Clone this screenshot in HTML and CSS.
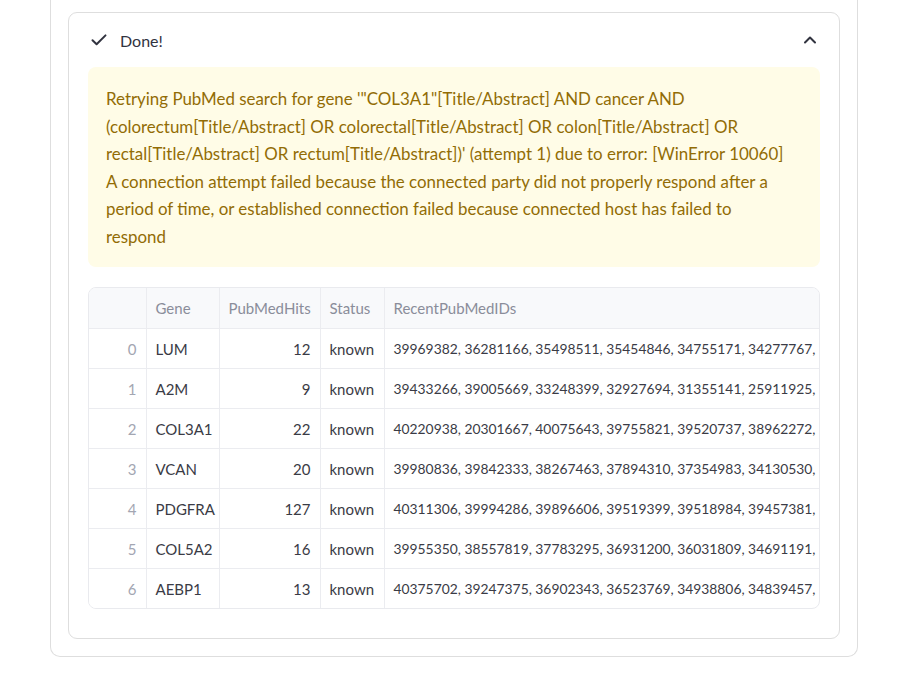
FILE: index.html
```html
<!DOCTYPE html>
<html>
<head>
<meta charset="utf-8">
<link rel="stylesheet" href="styles.css">
</head>
<body>
<div class="outer">
  <div class="expander">
    <div class="exp-head">
      <svg class="check" width="16" height="16" viewBox="0 0 16 16"><path d="M1.5 8.2 L5.6 12.2 L14.5 3.4" fill="none" stroke="#31333f" stroke-width="2" stroke-linecap="round" stroke-linejoin="round"/></svg>
      <span class="exp-title">Done!</span>
      <svg class="chev" width="14" height="14" viewBox="0 0 14 14"><path d="M2 9.5 L7 4.5 L12 9.5" fill="none" stroke="#31333f" stroke-width="2" stroke-linecap="round" stroke-linejoin="round"/></svg>
    </div>
    <div class="exp-body">
      <div class="alert">Retrying PubMed search for gene '"COL3A1"[Title/Abstract] AND cancer AND (colorectum[Title/Abstract] OR colorectal[Title/Abstract] OR colon[Title/Abstract] OR rectal[Title/Abstract] OR rectum[Title/Abstract])' (attempt 1) due to error: [WinError 10060] A connection attempt failed because the connected party did not properly respond after a period of time, or established connection failed because connected host has failed to respond</div>
      <div class="table-wrap">
        <table class="df">
          <thead>
            <tr><th class="idx"></th><th class="c-gene">Gene</th><th class="c-hits">PubMedHits</th><th class="c-status">Status</th><th class="c-ids">RecentPubMedIDs</th></tr>
          </thead>
          <tbody>
            <tr><td class="idx">0</td><td>LUM</td><td class="num">12</td><td>known</td><td class="ids">39969382, 36281166, 35498511, 35454846, 34755171, 34277767,</td></tr>
            <tr><td class="idx">1</td><td>A2M</td><td class="num">9</td><td>known</td><td class="ids">39433266, 39005669, 33248399, 32927694, 31355141, 25911925,</td></tr>
            <tr><td class="idx">2</td><td>COL3A1</td><td class="num">22</td><td>known</td><td class="ids">40220938, 20301667, 40075643, 39755821, 39520737, 38962272,</td></tr>
            <tr><td class="idx">3</td><td>VCAN</td><td class="num">20</td><td>known</td><td class="ids">39980836, 39842333, 38267463, 37894310, 37354983, 34130530,</td></tr>
            <tr><td class="idx">4</td><td>PDGFRA</td><td class="num">127</td><td>known</td><td class="ids">40311306, 39994286, 39896606, 39519399, 39518984, 39457381,</td></tr>
            <tr><td class="idx">5</td><td>COL5A2</td><td class="num">16</td><td>known</td><td class="ids">39955350, 38557819, 37783295, 36931200, 36031809, 34691191,</td></tr>
            <tr><td class="idx">6</td><td>AEBP1</td><td class="num">13</td><td>known</td><td class="ids">40375702, 39247375, 36902343, 36523769, 34938806, 34839457,</td></tr>
          </tbody>
        </table>
      </div>
    </div>
  </div>
</div>
</body>
</html>
```
FILE: styles.css
```css
html, body {
  margin: 0;
  padding: 0;
  background: #ffffff;
}
body {
  font-family: Lato, "Noto Sans", sans-serif;
  color: #31333f;
  height: 678px;
  overflow: hidden;
}
.outer {
  margin-left: 50px;
  width: 808px;
  box-sizing: border-box;
  border: 1px solid #dedede;
  border-top: none;
  border-radius: 0 0 10px 10px;
  padding: 12px 17px 17px 17px;
}
.expander {
  border: 1px solid #dedede;
  border-radius: 9px;
  height: 627px;
  box-sizing: border-box;
}
.exp-head {
  display: flex;
  align-items: center;
  height: 54px;
  padding: 0 22px 0 22px;
}
.check {
  flex: none;
  margin-right: 13px;
}
.exp-title {
  flex: 1;
  font-size: 16px;
  color: #31333f;
}
.chev {
  flex: none;
}
.exp-body {
  padding: 0 19px;
}
.alert {
  background: #fffce7;
  border-radius: 8px;
  color: #926c05;
  font-size: 16.9px;
  line-height: 27.5px;
  padding: 18px 27px 16px 18px;
  height: 200px;
  box-sizing: border-box;
}
.table-wrap {
  margin-top: 20px;
  border: 1px solid #e9eaee;
  border-radius: 8px;
  overflow: hidden;
}
.df {
  border-collapse: collapse;
  width: 100%;
  table-layout: fixed;
  font-size: 15px;
}
.df th, .df td {
  border-right: 1px solid #ebecf0;
  border-bottom: 1px solid #ebecf0;
  white-space: nowrap;
  overflow: hidden;
  padding: 0 9px;
  text-align: left;
  font-weight: normal;
}
.df th {
  background: #f8f9fb;
  color: #8a8d9a;
  height: 40px;
}
.df td {
  height: 39px;
  color: #3a3b45;
}
.df tbody tr:last-child td {
  border-bottom: none;
}
.df th:last-child, .df td:last-child {
  border-right: none;
}
.df .idx {
  width: 57px;
  box-sizing: border-box;
  text-align: right;
  color: #a3a6b2;
  background: #ffffff;
}
.df th.idx {
  background: #f8f9fb;
}
.df .c-gene { width: 73px; box-sizing: border-box; }
.df .c-hits { width: 101px; box-sizing: border-box; }
.df .c-status { width: 64px; box-sizing: border-box; }
.df .num { text-align: right; }
.df .ids { font-size: 13.85px; padding-left: 9px; padding-right: 2px; }
```
